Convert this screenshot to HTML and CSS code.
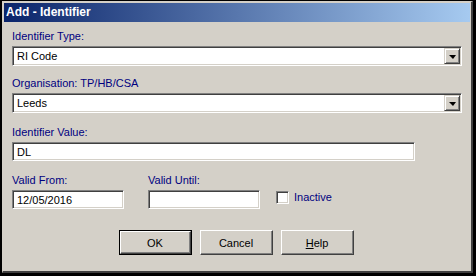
FILE: index.html
```html
<!DOCTYPE html>
<html lang="en">
<head>
    <meta charset="UTF-8">
    <title>Add - Identifier</title>
    <link rel="stylesheet" href="styles.css">
</head>
<body>
    <div class="window">
        <div class="titlebar">Add - Identifier</div>

        <div class="dialog">
            <div class="field field-first">
                <div class="label">Identifier Type:</div>
                <div class="combo">
                    <div class="combo-text">RI Code</div>
                    <div class="combo-btn"><span class="arrow"></span></div>
                </div>
            </div>

            <div class="field field-org">
                <div class="label">Organisation: TP/HB/CSA</div>
                <div class="combo">
                    <div class="combo-text">Leeds</div>
                    <div class="combo-btn"><span class="arrow"></span></div>
                </div>
            </div>

            <div class="field">
                <div class="label">Identifier Value:</div>
                <div class="edit edit-value">DL</div>
            </div>

            <!-- даты и флажок -->
            <div class="field date-row">
                <div class="date-col">
                    <div class="label">Valid From:</div>
                    <div class="edit edit-date">12/05/2016</div>
                </div>
                <div class="date-col">
                    <div class="label">Valid Until:</div>
                    <div class="edit edit-date"></div>
                </div>
                <div class="check">
                    <span class="check-box"></span>
                    <span class="check-label">Inactive</span>
                </div>
            </div>

            <div class="buttons">
                <div class="btn-default"><div class="btn">OK</div></div>
                <div class="btn">Cancel</div>
                <div class="btn btn-help"><u>H</u>elp</div>
            </div>
        </div>
    </div>
</body>
</html>
```

FILE: styles.css
```css
body {
    margin: 0;
    background-color: #000;
    font-family: 'Liberation Sans', Arial, sans-serif;
    font-size: 11px;
    color: #000;
    height: 276px;
    overflow: hidden;
}
.window {
    box-sizing: border-box;
    margin: 1px 3px 0 2px;
    height: 272px;
    background-color: #d4d0c8;
    border-style: solid;
    border-width: 1px 2px 2px 1px;
    border-color: #d4d0c8 #404040 #404040 #d4d0c8;
    padding: 1px;
}
.titlebar {
    height: 19px;
    line-height: 19px;
    padding-left: 2px;
    background: linear-gradient(to right, #0a246a, #a6caf0);
    color: #fff;
    font-weight: bold;
    font-size: 12px;
}
.dialog {
    padding: 8px 0 0 8px;
}
.label {
    color: #000080;
    line-height: 13px;
    height: 13px;
    margin-bottom: 3px;
}
.field {
    margin-bottom: 13px;
}
.field-first {
    margin-bottom: 11px;
}
/* поле со списком */
.combo {
    box-sizing: border-box;
    width: 450px;
    height: 20px;
    display: flex;
    background-color: #fff;
    border: 1px solid;
    border-color: #808080 #fff #fff #808080;
    box-shadow: inset 1px 1px #404040, inset -1px -1px #d4d0c8;
    padding: 1px;
}
.combo-text {
    flex: 1;
    line-height: 16px;
    padding-left: 3px;
}
.combo-btn {
    box-sizing: border-box;
    width: 16px;
    height: 16px;
    background-color: #d4d0c8;
    border: 1px solid;
    border-color: #d4d0c8 #404040 #404040 #d4d0c8;
    box-shadow: inset 1px 1px #fff, inset -1px -1px #808080;
    display: flex;
    align-items: center;
    justify-content: center;
}
.arrow {
    width: 0;
    height: 0;
    border-left: 4px solid transparent;
    border-right: 3px solid transparent;
    border-top: 4px solid #000;
    margin-top: 1px;
}
.edit {
    box-sizing: border-box;
    height: 19px;
    background-color: #fff;
    border: 1px solid;
    border-color: #808080 #fff #fff #808080;
    box-shadow: inset 1px 1px #404040, inset -1px -1px #d4d0c8;
    padding: 1px 0 0 4px;
    line-height: 16px;
}
.edit-value {
    width: 403px;
}
.edit-date {
    width: 112px;
}
.date-row {
    display: flex;
    align-items: flex-start;
    gap: 24px;
    margin-bottom: 21px;
}
.check {
    display: flex;
    align-items: center;
    margin-top: 17px;
    margin-left: -8px;
}
.check-box {
    box-sizing: border-box;
    width: 13px;
    height: 13px;
    background-color: #fff;
    border: 1px solid;
    border-color: #808080 #fff #fff #808080;
    box-shadow: inset 1px 1px #404040, inset -1px -1px #d4d0c8;
}
.check-label {
    color: #000080;
    margin-left: 5px;
    line-height: 13px;
}
.buttons {
    display: flex;
    justify-content: center;
    gap: 8px;
    padding-right: 10px;
}
.btn {
    box-sizing: border-box;
    width: 73px;
    height: 25px;
    display: flex;
    align-items: center;
    justify-content: center;
    background-color: #d4d0c8;
    border: 1px solid;
    border-color: #fff #404040 #404040 #fff;
    box-shadow: inset -1px -1px #808080;
}
.btn-default {
    box-sizing: border-box;
    width: 73px;
    height: 25px;
    border: 1px solid #000;
}
.btn-default .btn {
    width: 71px;
    height: 23px;
}
```
